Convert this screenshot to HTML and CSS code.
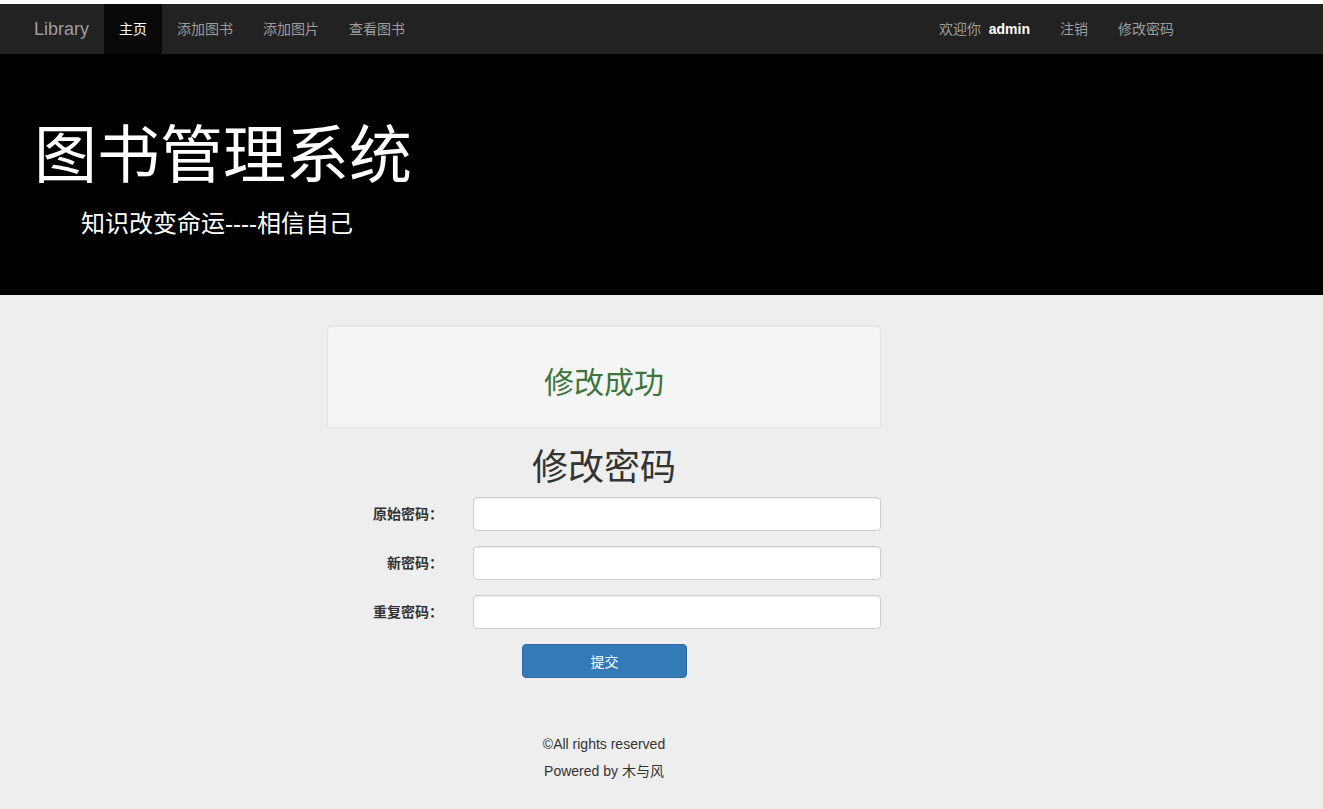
FILE: index.html
```html
<!DOCTYPE html>
<html lang="zh-CN">
<head>
<meta charset="utf-8">
<title>图书管理系统</title>
<link rel="stylesheet" href="styles.css">
</head>
<body>
<nav class="navbar">
  <a class="brand" href="#">Library</a>
  <ul class="nav">
    <li class="active"><a href="#">主页</a></li>
    <li><a href="#">添加图书</a></li>
    <li><a href="#">添加图片</a></li>
    <li><a href="#">查看图书</a></li>
  </ul>
  <ul class="nav nav-right">
    <li><a href="#">欢迎你&nbsp; <b class="user">admin</b></a></li>
    <li><a href="#">注销</a></li>
    <li><a href="#">修改密码</a></li>
  </ul>
</nav>
<header class="jumbotron">
  <h1 class="title">图书管理系统</h1>
  <p class="subtitle">知识改变命运----相信自己</p>
</header>
<main class="content">
  <div class="well">
    <h3 class="success">修改成功</h3>
  </div>
  <h2 class="form-title">修改密码</h2>
  <form class="form">
    <div class="row">
      <label class="label">原始密码：</label>
      <input class="input" type="password">
    </div>
    <div class="row">
      <label class="label">新密码：</label>
      <input class="input" type="password">
    </div>
    <div class="row">
      <label class="label">重复密码：</label>
      <input class="input" type="password">
    </div>
    <div class="actions">
      <button class="btn" type="button">提交</button>
    </div>
  </form>
  <footer class="footer">
    <p>©All rights reserved</p>
    <p>Powered by 木与风</p>
  </footer>
</main>
</body>
</html>
```
FILE: styles.css
```css
html, body {
  margin: 0;
  padding: 0;
}
body {
  background: #eeeeee;
  font-family: "Liberation Sans", "Noto Sans CJK SC", sans-serif;
  font-size: 14px;
  color: #333;
}
a { text-decoration: none; }

.navbar {
  display: flex;
  align-items: stretch;
  height: 50px;
  background: #222222;
  border-top: 4px solid #ffffff;
  padding: 0 134px 0 19px;
}
.brand {
  display: block;
  padding: 15px;
  font-size: 18px;
  line-height: 20px;
  color: #9d9d9d;
}
.nav {
  display: flex;
  list-style: none;
  margin: 0;
  padding: 0;
}
.nav-right { margin-left: auto; }
.nav li a {
  display: block;
  padding: 15px;
  line-height: 20px;
  color: #9d9d9d;
  font-size: 14px;
}
.nav li.active a {
  background: #080808;
  color: #ffffff;
}
.user {
  color: #ffffff;
  font-weight: bold;
}

.jumbotron {
  background: #000000;
  color: #ffffff;
  height: 241px;
  box-sizing: border-box;
  padding: 67px 0 0 34px;
}
.title {
  margin: 0;
  font-size: 63px;
  line-height: 69px;
  font-weight: 400;
}
.subtitle {
  margin: 17px 0 0 47px;
  font-size: 24px;
  line-height: 34px;
}

.content {
  width: 554px;
  margin: 30px 0 0 327px;
}
.well {
  background: #f5f5f5;
  border: 1px solid #e3e3e3;
  border-radius: 4px;
  padding: 40px 0 28px;
  box-shadow: inset 0 1px 1px rgba(0,0,0,.05);
}
.success {
  margin: 0;
  text-align: center;
  color: #3c763d;
  font-size: 30px;
  line-height: 33px;
  font-weight: 400;
}
.form-title {
  margin: 20px 0 9px;
  text-align: center;
  font-size: 36px;
  line-height: 40px;
  font-weight: 400;
  color: #333;
}
.form {
  display: flex;
  flex-direction: column;
  gap: 15px;
}
.row {
  display: grid;
  grid-template-columns: 116px 1fr;
  column-gap: 30px;
  align-items: center;
}
.label {
  text-align: right;
  font-weight: bold;
  font-size: 14px;
  line-height: 20px;
  color: #333;
}
.input {
  box-sizing: border-box;
  height: 34px;
  width: 100%;
  border: 1px solid #cccccc;
  border-radius: 4px;
  background: #ffffff;
  box-shadow: inset 0 1px 1px rgba(0,0,0,.075);
  padding: 6px 12px;
  margin: 0;
}
.actions {
  display: flex;
  padding-left: 195px;
}
.btn {
  box-sizing: border-box;
  width: 165px;
  height: 34px;
  background: #337ab7;
  border: 1px solid #2e6da4;
  border-radius: 4px;
  color: #ffffff;
  font-family: "Liberation Sans", "Noto Sans CJK SC", sans-serif;
  font-size: 14px;
  padding: 0;
}

.footer {
  margin-top: 58px;
  text-align: center;
}
.footer p {
  margin: 0 0 10px;
  font-size: 14px;
  line-height: 17px;
  color: #333;
}
```
